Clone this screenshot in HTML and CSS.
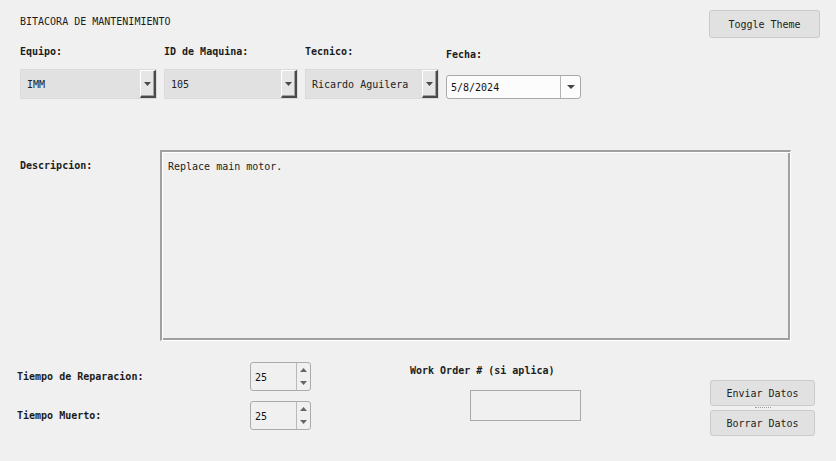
FILE: index.html
```html
<!DOCTYPE html>
<html lang="es">
<head>
<meta charset="utf-8">
<title>Bitacora de Mantenimiento</title>
<link rel="stylesheet" href="styles.css">
</head>
<body>
<div class="app">
  <header class="top">
    <h1 class="title">BITACORA DE MANTENIMIENTO</h1>
    <button class="btn btn-toggle">Toggle Theme</button>
  </header>

  <section class="fields">
    <div class="field f-equipo">
      <label class="lbl">Equipo:</label>
      <div class="combo">
        <span class="combo-text">IMM</span>
        <span class="combo-btn"><svg width="7" height="4" viewBox="0 0 7 4"><path d="M0 0h7L3.5 4z" fill="#4a4a4a"/></svg></span>
      </div>
    </div>
    <div class="field f-id">
      <label class="lbl">ID de Maquina:</label>
      <div class="combo">
        <span class="combo-text">105</span>
        <span class="combo-btn"><svg width="7" height="4" viewBox="0 0 7 4"><path d="M0 0h7L3.5 4z" fill="#4a4a4a"/></svg></span>
      </div>
    </div>
    <div class="field f-tec">
      <label class="lbl">Tecnico:</label>
      <div class="combo">
        <span class="combo-text">Ricardo Aguilera</span>
        <span class="combo-btn"><svg width="7" height="4" viewBox="0 0 7 4"><path d="M0 0h7L3.5 4z" fill="#4a4a4a"/></svg></span>
      </div>
    </div>
    <div class="field f-fecha">
      <label class="lbl">Fecha:</label>
      <div class="date">
        <span class="date-text">5/8/2024</span>
        <span class="date-btn"><svg width="8" height="4" viewBox="0 0 8 4"><path d="M0 0h8L4 4z" fill="#444"/></svg></span>
      </div>
    </div>
  </section>

  <section class="desc">
    <label class="lbl desc-lbl">Descripcion:</label>
    <div class="textarea">Replace main motor.</div>
  </section>

  <section class="bottom">
    <div class="times">
      <div class="time-row">
        <label class="lbl time-lbl">Tiempo de Reparacion:</label>
        <div class="spin">
          <span class="spin-text">25</span>
          <span class="spin-btns">
            <span class="spin-b"><svg width="7" height="4" viewBox="0 0 7 4"><path d="M0 4h7L3.5 0z" fill="#666"/></svg></span>
            <span class="spin-b"><svg width="7" height="4" viewBox="0 0 7 4"><path d="M0 0h7L3.5 4z" fill="#666"/></svg></span>
          </span>
        </div>
      </div>
      <div class="time-row">
        <label class="lbl time-lbl">Tiempo Muerto:</label>
        <div class="spin">
          <span class="spin-text">25</span>
          <span class="spin-btns">
            <span class="spin-b"><svg width="7" height="4" viewBox="0 0 7 4"><path d="M0 4h7L3.5 0z" fill="#666"/></svg></span>
            <span class="spin-b"><svg width="7" height="4" viewBox="0 0 7 4"><path d="M0 0h7L3.5 4z" fill="#666"/></svg></span>
          </span>
        </div>
      </div>
    </div>

    <div class="wo">
      <label class="lbl">Work Order # (si aplica)</label>
      <div class="entry"></div>
    </div>

    <div class="actions">
      <button class="btn btn-act">Enviar Datos</button>
      <span class="focus-dots"></span>
      <button class="btn btn-act">Borrar Datos</button>
    </div>
  </section>
</div>
</body>
</html>
```

FILE: styles.css
```css
* { box-sizing: border-box; }

html, body {
  margin: 0;
  padding: 0;
  background: #f0f0f0;
}

body {
  width: 836px;
  height: 461px;
  overflow: hidden;
  font-family: "DejaVu Sans Mono", "Liberation Mono", monospace;
  font-size: 10px;
  line-height: 12px;
  color: #1c1c1c;
}

.app {
  width: 836px;
  height: 461px;
}

/* header */
.top {
  display: flex;
  justify-content: space-between;
  align-items: flex-start;
  padding: 10px 16px 0 20px;
}

.title {
  margin: 6px 0 0 0;
  font-size: 10px;
  line-height: 12px;
  font-weight: normal;
  color: #1c1c1c;
}

.btn {
  font-family: inherit;
  font-size: 10px;
  line-height: 12px;
  color: #222;
  background: #e1e1e1;
  border: 1px solid #cacaca;
  border-radius: 3px;
  padding: 2px 0 0 0;
  margin: 0;
}

.btn-toggle {
  width: 111px;
  height: 28px;
}

.lbl {
  display: block;
  font-weight: bold;
  line-height: 12px;
  color: #1c1c1c;
}

/* fields row */
.fields {
  display: flex;
  gap: 7px;
  padding-left: 20px;
  margin-top: 8px;
}

.field .lbl { margin-bottom: 11px; }

.f-equipo .combo { width: 137px; }
.f-id .combo, .f-tec .combo { width: 134px; }

.combo {
  display: flex;
  height: 30px;
  background: #e1e1e1;
  border: 1px solid #dadada;
}

.combo-text {
  flex: 1;
  padding: 1px 0 0 6px;
  line-height: 28px;
  color: #222;
  white-space: nowrap;
}

.combo-btn {
  width: 16px;
  display: flex;
  align-items: center;
  justify-content: center;
  background: #e6e6e6;
  border-top: 1px solid #ffffff;
  border-left: 1px solid #ffffff;
  border-right: 2px solid #4a4a4a;
  border-bottom: 2px solid #4a4a4a;
  box-shadow: inset -1px -1px 0 #a0a0a0;
}

.f-fecha { padding-top: 3px; }
.f-fecha .lbl { margin-bottom: 14px; }

.date {
  display: flex;
  width: 135px;
  height: 24px;
  background: #fcfcfc;
  border: 1px solid #a9a9a9;
  border-radius: 3px;
}

.date-text {
  flex: 1;
  padding: 1px 0 0 4px;
  line-height: 22px;
  color: #111;
}

.date-btn {
  width: 20px;
  display: flex;
  align-items: center;
  justify-content: center;
  border-left: 1px solid #b4b4b4;
}

/* description */
.desc {
  display: flex;
  padding-left: 20px;
  margin-top: 51px;
}

.desc-lbl {
  width: 140px;
  padding-top: 10px;
}

.textarea {
  width: 631px;
  height: 191px;
  padding: 9px 0 0 6px;
  background: #f0f0f0;
  border-top: 2px solid #a0a0a0;
  border-left: 2px solid #a0a0a0;
  border-right: 1px solid #ffffff;
  border-bottom: 1px solid #ffffff;
  box-shadow: inset 1px 1px 0 #ffffff, inset -2px -2px 0 #a0a0a0;
  color: #222;
}

/* bottom */
.bottom {
  display: flex;
  align-items: flex-start;
  padding-left: 17px;
}

.times {
  display: flex;
  flex-direction: column;
  gap: 10px;
  margin-top: 21px;
}

.time-row {
  display: flex;
  align-items: center;
}

.time-lbl { width: 233px; }

.spin {
  display: flex;
  width: 61px;
  height: 29px;
  border: 1px solid #ababab;
  border-radius: 3px;
  background: #f0f0f0;
}

.spin-text {
  flex: 1;
  padding: 1px 0 0 4px;
  line-height: 27px;
  color: #111;
}

.spin-btns {
  width: 14px;
  display: flex;
  flex-direction: column;
  border-left: 1px solid #b9b9b9;
}

.spin-b {
  flex: 1;
  display: flex;
  align-items: center;
  justify-content: center;
}

.wo {
  display: flex;
  flex-direction: column;
  margin-left: 99px;
  margin-top: 24px;
  width: 171px;
}

.entry {
  margin-top: 13px;
  margin-left: 60px;
  width: 111px;
  height: 31px;
  border: 1px solid #a9a9a9;
  background: #f0f0f0;
}

.actions {
  display: flex;
  flex-direction: column;
  align-items: center;
  margin-left: 129px;
  margin-top: 39px;
}

.btn-act {
  width: 105px;
  height: 26px;
}

.focus-dots {
  display: block;
  width: 16px;
  height: 1px;
  margin: 1px 0 2px 0;
  border-top: 1px dotted #9a9a9a;
}
```
